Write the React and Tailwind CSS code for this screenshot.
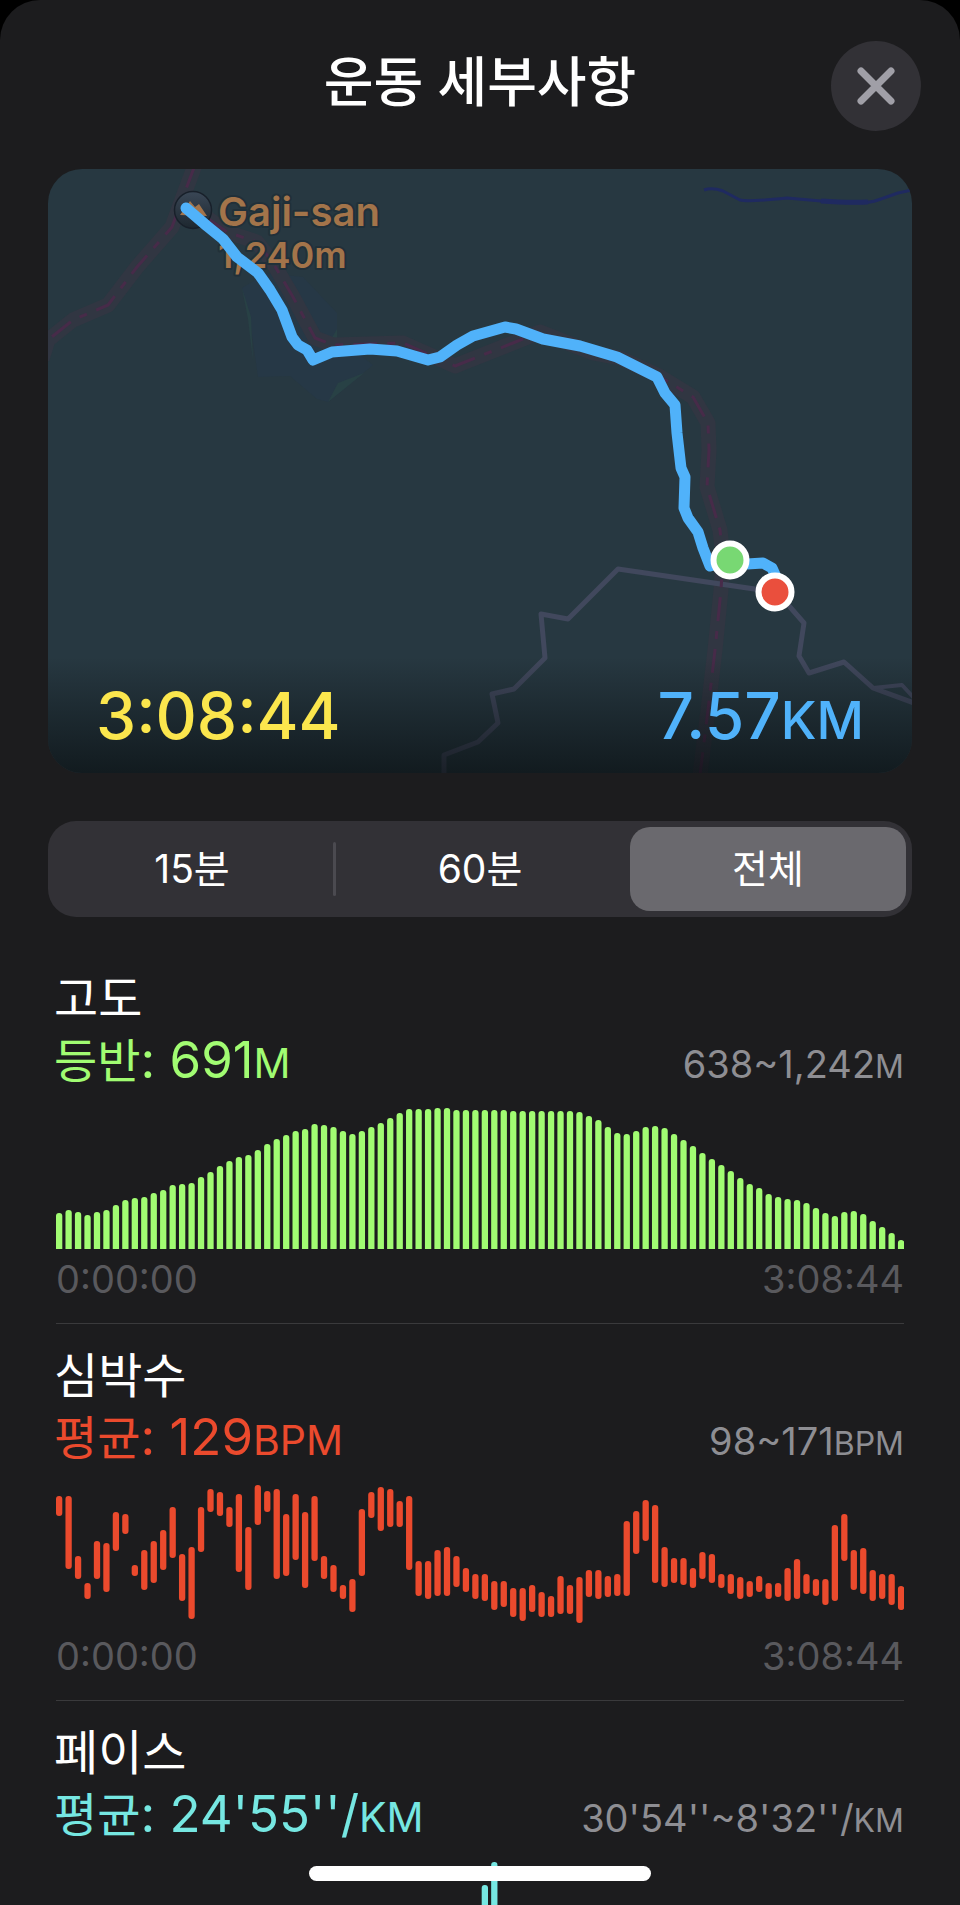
import { useState } from 'react'

const RANGES = ['15분', '60분', '전체']

const CHART_HEIGHT = 141
const BAR_WIDTH = 6.3
const BAR_STEP = 9.46

// one bar height per sample
const ELEVATION = [
  36, 39, 37, 34, 37, 39, 44, 49, 51, 52, 56, 59, 64, 65, 66, 72, 77, 83, 88, 92, 94, 99, 105, 110, 114, 118, 120, 125,
  124, 122, 118, 115, 118, 122, 126, 131, 136, 140, 140, 140, 141, 141, 139, 139, 139, 139, 139, 139, 138, 138, 138,
  138, 138, 138, 138, 137, 133, 129, 122, 116, 115, 118, 122, 123, 121, 115, 109, 103, 96, 90, 84, 78, 71, 65, 61, 55,
  52, 50, 49, 46, 41, 36, 33, 37, 38, 35, 28, 22, 16, 9,
]

// [top, bottom] of each bar, measured from the top of the chart
const HEART_RATE = [
  [11, 31], [11, 84], [71, 94], [98, 114], [56, 94], [58, 107], [27, 66], [29, 49], [80, 91], [65, 105],
  [56, 98], [45, 85], [22, 73], [69, 116], [62, 134], [22, 67], [4, 27], [7, 31], [22, 42], [9, 87],
  [42, 105], [0, 40], [6, 27], [4, 94], [29, 91], [9, 75], [27, 103], [11, 76], [71, 94], [80, 107],
  [100, 114], [94, 127], [24, 91], [7, 33], [2, 46], [4, 42], [16, 42], [11, 85], [76, 111], [76, 114],
  [65, 111], [62, 111], [71, 102], [83, 107], [89, 114], [89, 116], [96, 125], [96, 122], [103, 132], [103, 136],
  [100, 127], [107, 132], [111, 132], [91, 129], [100, 129], [92, 138], [85, 112], [85, 114], [91, 112], [89, 111],
  [36, 111], [26, 69], [15, 56], [20, 98], [62, 102], [73, 98], [73, 100], [83, 103], [67, 94], [69, 98],
  [89, 103], [89, 109], [92, 114], [96, 112], [91, 107], [98, 114], [98, 112], [83, 116], [74, 114], [89, 109],
  [94, 111], [94, 120], [40, 116], [29, 76], [65, 105], [63, 109], [85, 116], [89, 114], [89, 120], [101, 125],
]

const PACE = ELEVATION.map((_, i) => (i === 45 ? 118 : i === 46 ? 141 : 40))

const fromHeights = (list) => list.map((h) => [CHART_HEIGHT - h, CHART_HEIGHT + 6])

const SECTIONS = [
  {
    title: '고도',
    label: '등반',
    value: '691',
    unit: 'M',
    range: '638~1,242',
    text: 'text-[#a1fc72]',
    fill: 'fill-[#a1fc72]',
    bars: fromHeights(ELEVATION),
    times: ['0:00:00', '3:08:44'],
  },
  {
    title: '심박수',
    label: '평균',
    value: '129',
    unit: 'BPM',
    range: '98~171',
    text: 'text-[#eb4a2d]',
    fill: 'fill-[#eb4a2d]',
    bars: HEART_RATE,
    times: ['0:00:00', '3:08:44'],
  },
  {
    title: '페이스',
    label: '평균',
    value: "24'55''/",
    unit: 'KM',
    range: "30'54''~8'32''/",
    text: 'text-[#76e7e2]',
    fill: 'fill-[#76e7e2]',
    bars: fromHeights(PACE),
  },
]

const TRAIL_WEST = '147,-4 135,28 124,58 89,98 60,136 25,151 0,171 -6,190'
const TRAIL_EAST =
  '159,49 179,63 209,73 225,94 245,128 267,169 285,176 355,174 407,197 465,174 492,163 545,184 572,189 609,206 645,228 660,254 661,281 659,318 672,361 675,388 673,421 667,481 660,541 652,606'
const ROAD =
  '866,534 825,519 796,493 761,504 751,487 756,454 742,438 727,423 570,400 520,450 493,445 497,489 466,520 444,525 450,554 430,573 396,586 396,606'
const ROUTE =
  '138,39 159,57 175,70 189,88 210,104 222,121 234,141 244,168 250,176 259,181 265,191 284,183 322,180 349,182 380,191 392,188 409,176 425,167 457,158 468,160 495,170 532,177 569,188 609,208 617,224 627,236 629,264 633,299 637,308 636,339 640,349 650,363 655,379 662,397 682,391 699,395 715,394 724,399 729,410'

function Marker({ x, y, color }) {
  return <circle cx={x} cy={y} r="16.5" fill={color} stroke="#fff" strokeWidth="6" />
}

function RouteMap() {
  return (
    <svg viewBox="0 0 864 604" className="block w-full" role="img" aria-label="Gaji-san 1,240m">
      <defs>
        <linearGradient id="fade" x1="0" y1="0" x2="0" y2="1">
          <stop offset="0" stopColor="#080d0f" stopOpacity="0" />
          <stop offset="1" stopColor="#080d0f" stopOpacity="0.68" />
        </linearGradient>
        <linearGradient id="peak" x1="0" y1="0" x2="0" y2="1">
          <stop offset="0" stopColor="#3a4756" />
          <stop offset="1" stopColor="#1d272f" />
        </linearGradient>
      </defs>
      <rect width="864" height="604" fill="#273841" />

      {/* reservoir */}
      <path d="M194 119L219 104L255 108L289 144V168L325 196L280 233L269 230L242 207L210 208L202 151Z" fill="#263846" />
      <path d="M194 119L203 148L205 192L200 150Z M280 233L290 214L316 204Z M289 160V176L281 174Z" fill="#284145" />

      <g fill="none" strokeLinejoin="round">
        <path d="M656 21Q664 18 675 22L692 31Q700 33 739 29L773 32Q818 36 830 31L850 24L864 21" stroke="#1f2a60" strokeWidth="3" />
        <path d="M773 32Q800 34 820 33" stroke="#1f2a60" strokeWidth="5" />
        <g stroke="#313642" strokeWidth="15">
          <polyline points={TRAIL_WEST} />
          <polyline points={TRAIL_EAST} />
        </g>
        <polyline points={ROAD} stroke="#41485d" strokeWidth="5" />
        <polyline points="825,519 854,516 866,529" stroke="#41485d" strokeWidth="4" />
        <g stroke="#472b49" strokeWidth="3" strokeDasharray="24 10 8 10">
          <polyline points={TRAIL_WEST} />
          <polyline points={TRAIL_EAST} />
        </g>
      </g>

      <circle cx="145" cy="41" r="18.5" fill="url(#peak)" stroke="#18202a" strokeWidth="1.5" />
      <path d="M132 46L142 32L147 38L151 35L159 47Z" fill="#a3744a" />

      <g
        fill="#a3744a"
        stroke="#213039"
        strokeWidth="4"
        paintOrder="stroke"
        strokeLinejoin="round"
        className="font-semibold"
      >
        <text x="170" y="57" fontSize="40">Gaji-san</text>
        <text x="170" y="99" fontSize="36">1,240m</text>
      </g>

      <rect y="488" width="864" height="116" fill="url(#fade)" />

      <polyline
        points={ROUTE}
        fill="none"
        stroke="#50b2fa"
        strokeWidth="11"
        strokeLinecap="round"
        strokeLinejoin="round"
      />
      <Marker x={682} y={391} color="#78d873" />
      <Marker x={727} y={423} color="#ea4f3d" />
    </svg>
  )
}

function BarChart({ bars, fill }) {
  return (
    <svg viewBox={`0 0 848 ${CHART_HEIGHT}`} className={`mt-5 block w-full ${fill}`} aria-hidden>
      {bars.map(([top, bottom], i) => (
        <rect key={i} x={i * BAR_STEP} y={top} width={BAR_WIDTH} height={bottom - top} rx="3" />
      ))}
    </svg>
  )
}

function Metric({ title, label, value, unit, range, text, fill, bars, times }) {
  return (
    <section className="border-b border-[#3a3a3c] pt-[22px] pb-[22px]">
      <h2 className="-ml-0.5 text-5xl/[60px] font-normal text-white">{title}</h2>
      <div className="mt-px -ml-0.5 flex h-[58px] items-baseline justify-between whitespace-nowrap">
        <p className={`text-[51px]/[60px] ${text}`}>
          <span className="text-[47px]/[60px]">{label}</span>: {value}
          <span className="text-[41px]/[60px]">{unit}</span>
        </p>
        <p className="text-[38px]/[60px] text-[#8e8e93]">
          {range}
          <span className="text-[32px]/[60px]">{unit}</span>
        </p>
      </div>
      <BarChart bars={bars} fill={fill} />
      {times && (
        <div className="mt-2 flex justify-between text-[38px]/[44px] text-[#59595d]">
          {times.map((t) => (
            <span key={t}>{t}</span>
          ))}
        </div>
      )}
    </section>
  )
}

export default function App() {
  const [active, setActive] = useState('전체')

  return (
    <div className="relative h-screen overflow-hidden bg-black font-['Inter','Noto_Sans_CJK_KR',sans-serif]">
      <main className="h-full overflow-y-auto rounded-t-[40px] bg-[#1c1c1e] [scrollbar-width:none]">
        <header className="grid grid-cols-[90px_1fr_90px] items-start px-[39px] pt-[41px] pb-[38px]">
          <h1 className="col-start-2 text-center text-[54px]/[84px] font-medium text-white">운동 세부사항</h1>
          <button
            type="button"
            aria-label="닫기"
            className="flex size-[90px] items-center justify-center rounded-full bg-[#323136]"
          >
            <svg viewBox="0 0 38 38" className="size-[38px]" fill="none" stroke="#a09fa7" strokeWidth="7" strokeLinecap="round">
              <path d="M4 4L34 34M34 4L4 34" />
            </svg>
          </button>
        </header>

        <div className="relative mx-12 overflow-hidden rounded-[34px]">
          <RouteMap />
          <div className="absolute inset-x-12 bottom-3 flex items-baseline justify-between text-[64px]/[80px] font-medium">
            <span className="text-[#fbe64d]">3:08:44</span>
            <span className="text-[#50b2fa]">
              7.57<span className="text-[52px]/[80px]">KM</span>
            </span>
          </div>
        </div>

        <div className="mx-12 mt-12 grid h-24 grid-cols-3 rounded-[28px] bg-[#323136] text-[39px]/[44px] text-white">
          {RANGES.map((r, i) => (
            <div key={r} className="relative p-1.5">
              {i === 1 && <span className="absolute top-[21px] -left-[3px] h-[54px] w-[3px] rounded-full bg-[#4b4a50]" />}
              <button
                type="button"
                aria-pressed={active === r}
                onClick={() => setActive(r)}
                className={`size-full rounded-[20px] ${active === r ? 'bg-[#6a696e]' : ''}`}
              >
                {r}
              </button>
            </div>
          ))}
        </div>

        <div className="mx-14 mt-[30px]">
          {SECTIONS.map((s) => (
            <Metric key={s.title} {...s} />
          ))}
        </div>
      </main>
      {/* home indicator */}
      <div className="absolute bottom-6 left-1/2 h-[15px] w-[342px] -translate-x-1/2 rounded-full bg-white" />
    </div>
  )
}
